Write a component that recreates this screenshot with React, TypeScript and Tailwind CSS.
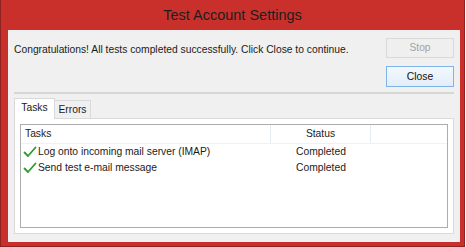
import React from "react";

const FONT = { fontFamily: '"Liberation Sans", Arial, sans-serif' };

function Check() {
  return (
    <svg width="14" height="12" viewBox="0 0 14 12" className="shrink-0">
      <path
        d="M1.5 6.5 L5 10 L12.5 1.5"
        fill="none"
        stroke="#2f9a2f"
        strokeWidth="1.8"
        strokeLinecap="round"
        strokeLinejoin="round"
      />
    </svg>
  );
}

const rows = [
  { task: "Log onto incoming mail server (IMAP)", status: "Completed" },
  { task: "Send test e-mail message", status: "Completed" },
];

export default function App() {
  return (
    <div className="w-[466px] h-[247px] bg-white overflow-hidden text-[10.3px] text-[#1b1b1b]" style={FONT}>
      <div className="w-[465px] h-[247px] flex flex-col bg-[#c9302c] border-x border-b border-[#8e221e] pl-[7px] pr-[4px] pb-[4px]">
        <div className="h-[30px] flex items-center justify-center pt-[1px] text-[14.5px] text-[#1e1e1e] -ml-[3px]">
          Test Account Settings
        </div>
        <div className="flex-1 bg-[#f0f0f0] flex flex-col px-[6px]">
          <div className="flex justify-between items-start mt-[8px] h-[20px]">
            <span className="mt-[4px]">Congratulations! All tests completed successfully. Click Close to continue.</span>
            <button className="w-[68px] h-[20px] border border-[#d9d9d9] bg-[#efefef] text-[#a3a3a3]">Stop</button>
          </div>
          <div className="flex justify-end mt-[8px]">
            <button className="w-[68px] h-[21px] border border-[#7eb4ea] bg-gradient-to-b from-[#f2f8fd] to-[#e3eef9] text-[#111]">
              Close
            </button>
          </div>
          <div className="h-[2px] bg-[#d6d6d6] mt-[5px]" />
          <div className="flex items-end mt-[4px] h-[20px]">
            <div className="h-[21px] w-[41px] pb-[2px] bg-white border border-b-0 border-[#d9d9d9] relative z-10 -mb-px flex items-center justify-center">
              Tasks
            </div>
            <div className="h-[18px] w-[36px] bg-[#f0f0f0] border border-l-0 border-b-0 border-[#d9d9d9] flex items-center justify-center">
              Errors
            </div>
          </div>
          <div className="h-[116px] bg-white border border-[#d9d9d9] p-[5px]">
            <div className="h-full border border-[#acacac] bg-white">
              <div className="flex h-[19px] border-b border-[#eef2f7]">
                <div className="w-[250px] pl-[4px] flex items-center border-r border-[#e3ebf5]">Tasks</div>
                <div className="w-[100px] flex items-center justify-center border-r border-[#e3ebf5]">Status</div>
                <div className="flex-1" />
              </div>
              {rows.map((r) => (
                <div key={r.task} className="flex h-[16px] items-center">
                  <div className="w-[250px] pl-[2px] flex items-center gap-[1px]">
                    <Check />
                    <span>{r.task}</span>
                  </div>
                  <div className="w-[100px] text-center">{r.status}</div>
                </div>
              ))}
            </div>
          </div>
        </div>
      </div>
    </div>
  );
}
